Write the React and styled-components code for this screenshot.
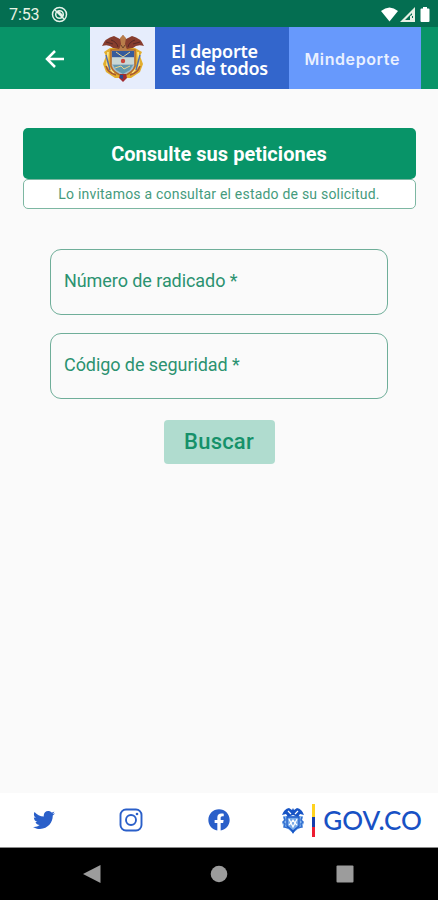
import React from "react";
import styled, { createGlobalStyle } from "styled-components";
import { FaTwitter, FaFacebook } from "react-icons/fa";

const Global = createGlobalStyle`
  * { box-sizing: border-box; }
  body { margin: 0; background: #fafafa; font-family: Roboto, sans-serif; }
`;
const Screen = styled.div`
  width: 438px; height: 900px; display: flex; flex-direction: column;
  background: #fafafa; overflow: hidden;
`;
const StatusBar = styled.div`
  height: 27px; flex: none; background: #046e51; display: flex; align-items: center;
  padding: 2px 6px 0 9px; color: #e9f3e4;
`;
const Clock = styled.span`font-size: 16px; line-height: 20px; letter-spacing: -0.1px; width: 42px;`;
const StatusIcons = styled.div`margin-left: auto; display: flex; gap: 2px; align-items: center;`;
const Header = styled.header`
  height: 62.4px; flex: none; background: #089468; display: flex; padding-right: 17.5px;
`;
const Back = styled.button`
  width: 90px; border: 0; padding: 1px 0 0 44.5px; background: transparent; display: flex; align-items: center;
`;
const CrestTile = styled.div`
  width: 65px; background: #e6edfc; display: flex; align-items: center; justify-content: center;
`;
const Slogan = styled.div`
  width: 134px; background: #3366cc; color: #fff; padding: 16px 0 0 16px;
  font: 600 18px/17px "Noto Sans", sans-serif; white-space: nowrap; letter-spacing: -0.3px;
`;
const Ministry = styled.div`
  flex: 1; background: #6799fc; color: #e9f0ff; display: flex; align-items: center;
  padding: 1px 0 0 15.5px; font: 600 16px/20px Inter, sans-serif; letter-spacing: 0.6px;
`;
const Main = styled.main`
  flex: 1; padding: 39px 22.5px 0; display: flex; flex-direction: column; align-items: center;
`;
const Title = styled.h1`
  margin: 0; width: 100%; height: 51px; border-radius: 5px; background: #089468; color: #fff;
  display: flex; align-items: center; justify-content: center;
  font-size: 20px; font-weight: 700; letter-spacing: 0.03px;
`;
const Note = styled.p`
  margin: 0; width: 100%; height: 30px; border: 1px solid #7db7a2; border-radius: 5px; background: #fff;
  color: #459b7d; font-size: 14px; letter-spacing: 0.21px; white-space: nowrap;
  display: flex; align-items: center; justify-content: center;
`;
const Form = styled.form`
  margin-top: 39.5px; width: 338px; display: flex; flex-direction: column; align-items: center; gap: 18px;
`;
const Field = styled.label`
  width: 100%; height: 66px; border: 1px solid #6fae99; border-radius: 11px; padding: 0 13px 2px;
  display: flex; align-items: center; color: #2b9270; font-size: 18px; letter-spacing: -0.07px;
`;
const Submit = styled.button`
  margin-top: 3.5px; width: 111px; height: 44px; border: 0; border-radius: 4px; padding: 0;
  background: #b0dccf; color: #16916a; font: 500 22px/44px Roboto, sans-serif; letter-spacing: 0.2px;
`;
const Footer = styled.footer`
  height: 55px; flex: none; background: #fff; border-bottom: 1px solid #8b8b8b; display: flex; align-items: center;
  color: #2a5fc9;
`;
const Social = styled.a`width: 87.6px; display: flex; justify-content: center; line-height: 0;`;
const Gov = styled.div`margin-left: 18px; display: flex; align-items: center;`;
const Flag = styled.span`
  width: 3px; height: 33px; margin: 0 8px 0 7.5px;
  background: linear-gradient(#ffd21f 0 40%, #153cac 40% 70%, #ed1c32 70%);
`;
const GovName = styled.span`font: 500 26px/32px Lato, sans-serif; color: #1851c4; letter-spacing: 0;`;
const NavBar = styled.nav`
  height: 52px; flex: none; background: #000; display: flex; align-items: center;
  justify-content: space-between; padding: 0 84px 0 83px; color: #9c9c9c;
`;

const Crest = () => (
  <svg width="44" height="48" viewBox="0 0 44 48">
    <path d="M9 14 3 18l2 4-3 8 3 8 9 6h16l9-6 3-8-3-8 2-4-7-4Z" fill="#e2ae2e" />
    <path d="M7 18 6 31l7 8M37 18l1 13-7 8" fill="none" stroke="#fae487" strokeWidth="1.8" />
    <path d="M5 21 9 36M39 21l-4 15" stroke="#526da8" strokeWidth="1.5" />
    <path d="M5 32q2 7 10 9M39 32q-2 7-10 9" fill="none" stroke="#a65534" strokeWidth="1.5" />
    <path d="M10 16h24v16q-2 7-12 10-10-3-12-10Z" fill="#a9bdc9" stroke="#b56b28" strokeWidth="1.5" />
    <path d="M11 17h22v6H11Z" fill="#355b9c" />
    <path d="M11 24h22v6H11Z" fill="#c9d7d5" />
    <path d="M12 31h20l-3 5-7 4-7-4Z" fill="#6499ad" />
    <path d="m15 18 7 5 7-5M14 34l6-2 3 3 6-3" fill="none" stroke="#ead38c" />
    <circle cx="22" cy="27" r="2.2" fill="#cb463b" />
    <path d="M1 12Q4 4 13 2l6 3 3-4 3 4 6-3q9 2 12 10-7-2-11 2l-6 1-4-2-4 2-6-1Q8 10 1 12Z" fill="#873d2e" />
    <path d="M10 6q6 2 7 7M34 6q-6 2-7 7M5 8l7 2M39 8l-7 2" fill="none" stroke="#562a26" />
    <path d="m19 4 3-3 3 3-1 6 2 6h-8l2-6Z" fill="#b97d4a" />
    <path d="m20 11 2 3 2-3" stroke="#694328" fill="none" />
    <path d="M19 40h6l1 4-4 4-4-4Z" fill="#a02d32" />
    <path d="M19 41h3v4l-3-1Z" fill="#284c91" />
  </svg>
);
const BlueCrest = () => (
  <svg width="24" height="27" viewBox="0 0 24 27">
    <path d="M2 9h20l-1 5 2 2-2 4-4 2-5 4-5-4-4-2-2-4 2-2Z" fill="#8ab8ee" />
    <path d="M1 8Q3 2 8 1l3 2 1-2 1 2 3-2q5 1 7 7l-4-1-2 3-5-2-5 2-2-3Z" fill="#1754c4" />
    <path d="m3 10 1 3-2 2 2 2-1 3 5 1 4 4 4-4 5-1-1-3 2-2-2-2 1-3" fill="none" stroke="#316fd0" strokeWidth="1.5" />
    <path d="M6 10h12v9l-6 5-6-5Z" fill="#76a9e8" stroke="#1d5bc8" strokeWidth="1.3" />
    <path d="m8 12 2 4 2-3 2 3 2-4M8 18l2-2 2 4 2-4 2 2M7 4l3 3M17 4l-3 3" fill="none" stroke="#fff" strokeWidth="1.2" />
    <path d="m10 23 2 4 2-4" fill="#1857c6" />
  </svg>
);

export default function App() {
  return (
    <Screen>
      <Global />
      <StatusBar>
        <Clock>7:53</Clock>
        <svg width="17" height="17" viewBox="0 0 17 17" fill="none" stroke="#e6f3ea" strokeWidth="1.5">
          <circle cx="8.5" cy="8.5" r="7" /><circle cx="8.5" cy="8.5" r="3.8" />
          <path d="m4 4 9 9M7 5l5 5" />
        </svg>
        <StatusIcons>
          <svg width="17" height="15" viewBox="0 0 17 15"><path d="M0 4Q8.5-3 17 4L8.5 14.5Z" fill="#fff" /></svg>
          <svg width="16" height="15" viewBox="0 0 16 15">
            <path d="M0 15 15 0v15Z" fill="#e7f1e4" /><path d="M5 13 12 6v2l-2 1v4Z" fill="#046e51" /><path d="M12.500 9v2" stroke="#046e51" />
          </svg>
          <svg width="14" height="16" viewBox="0 0 14 16"><path d="M5 0h4v1.500h1.500q1 0 1 1V14q0 1-1 1h-7q-1 0-1-1V2.500q0-1 1-1H5Z" fill="#fff" /></svg>
        </StatusIcons>
      </StatusBar>
      <Header>
        <Back type="button" aria-label="Volver">
          <svg width="19" height="18" viewBox="0 0 19 18" fill="none" stroke="#fff" strokeWidth="2.500"><path d="M19 9H2M10 1 2 9l8 8" /></svg>
        </Back>
        <CrestTile><Crest /></CrestTile>
        <Slogan>El deporte<br />es de todos</Slogan>
        <Ministry>Mindeporte</Ministry>
      </Header>
      <Main>
        <Title>Consulte sus peticiones</Title>
        <Note>Lo invitamos a consultar el estado de su solicitud.</Note>
        <Form>
          <Field>Número de radicado *</Field>
          <Field>Código de seguridad *</Field>
          <Submit type="button">Buscar</Submit>
        </Form>
      </Main>
      <Footer>
        <Social aria-label="Twitter"><FaTwitter size={22} /></Social>
        <Social aria-label="Instagram">
          <svg width="24" height="24" viewBox="0 0 24 24" fill="none" stroke="currentColor" strokeWidth="1.9">
            <rect x="1.500" y="1.500" width="21" height="21" rx="5.500" /><circle cx="12" cy="12" r="5" />
            <circle cx="18" cy="6" r="1.300" fill="currentColor" stroke="none" />
          </svg>
        </Social>
        <Social aria-label="Facebook"><FaFacebook size={22} /></Social>
        <Gov><BlueCrest /><Flag /><GovName>GOV.CO</GovName></Gov>
      </Footer>
      <NavBar>
        <svg width="18" height="20" viewBox="0 0 18 20"><path d="M0 10 17.500 1v18Z" fill="currentColor" /></svg>
        <svg width="18" height="18" viewBox="0 0 18 18"><circle cx="9" cy="9" r="8.300" fill="currentColor" /></svg>
        <svg width="18" height="18" viewBox="0 0 18 18"><rect x=".5" y=".5" width="17" height="17" rx="1" fill="currentColor" /></svg>
      </NavBar>
    </Screen>
  );
}
